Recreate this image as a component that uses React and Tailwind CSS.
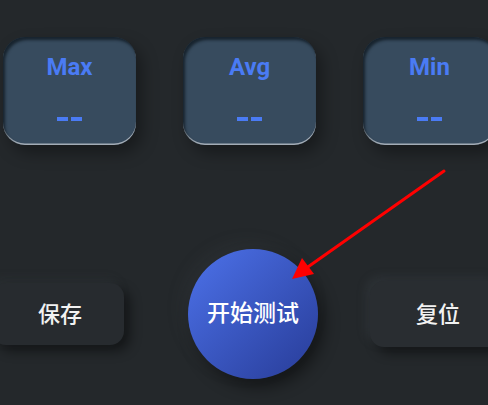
import React from "react";

const stats = ["Max", "Avg", "Min"];

const App = () => {
  return (
    <div
      className="relative w-[488px] h-[405px] overflow-hidden bg-[#24282b]"
      style={{ fontFamily: "Roboto, 'Noto Sans CJK SC', sans-serif" }}
    >
      {/* Stat cards */}
      <div className="flex gap-[47px] pl-[3px] pt-[37px]">
        {stats.map((label) => (
          <div
            key={label}
            className="shrink-0 w-[133px] h-[108px] rounded-[22px] bg-[#374b5e] flex flex-col items-center pt-[15px] shadow-[inset_2px_3px_3px_rgba(10,18,26,0.7),inset_0_-1.5px_0_rgba(190,196,204,0.8),6px_8px_16px_rgba(0,0,0,0.35)]"
          >
            <span className="text-[24px] font-bold leading-[30px] text-[#4a7bf4]">
              {label}
            </span>
            <div className="mt-[35px] flex gap-[3px]">
              <span className="w-[11px] h-[3.5px] bg-[#4a7bf4]" />
              <span className="w-[11px] h-[3.5px] bg-[#4a7bf4]" />
            </div>
          </div>
        ))}
      </div>

      {/* Actions */}
      <div className="flex items-center mt-[104px] -ml-[8px]">
        <button className="shrink-0 w-[132px] h-[62px] rounded-[14px] bg-[#272b2f] text-[#f2f2f2] text-[22px] font-medium shadow-[6px_6px_12px_rgba(0,0,0,0.45),-4px_-4px_10px_rgba(60,66,72,0.25)] pl-[4px]">
          保存
        </button>
        <button className="shrink-0 ml-[64px] w-[130px] h-[130px] rounded-full bg-gradient-to-br from-[#4d72ea] to-[#283c98] text-white text-[23px] font-medium shadow-[6px_8px_16px_rgba(0,0,0,0.45),-6px_-6px_16px_rgba(70,76,84,0.18)]">
          开始测试
        </button>
        <button className="shrink-0 ml-[52px] w-[132px] h-[66px] rounded-[14px] bg-[#292d31] text-[#f2f2f2] text-[22px] font-medium shadow-[6px_6px_12px_rgba(0,0,0,0.45),-4px_-4px_10px_rgba(70,76,82,0.3)]">
          <span className="relative left-[2px]">复位</span>
        </button>
      </div>

      {/* Annotation arrow */}
      <svg
        className="absolute left-0 top-0 pointer-events-none"
        width="488"
        height="405"
        viewBox="0 0 488 405"
      >
        <line x1="444" y1="171" x2="305" y2="269" stroke="#ff0000" strokeWidth="3" strokeLinecap="round" />
        <polygon points="292,279 302,258 314,274" fill="#ff0000" />
      </svg>
    </div>
  );
};

export default App;
